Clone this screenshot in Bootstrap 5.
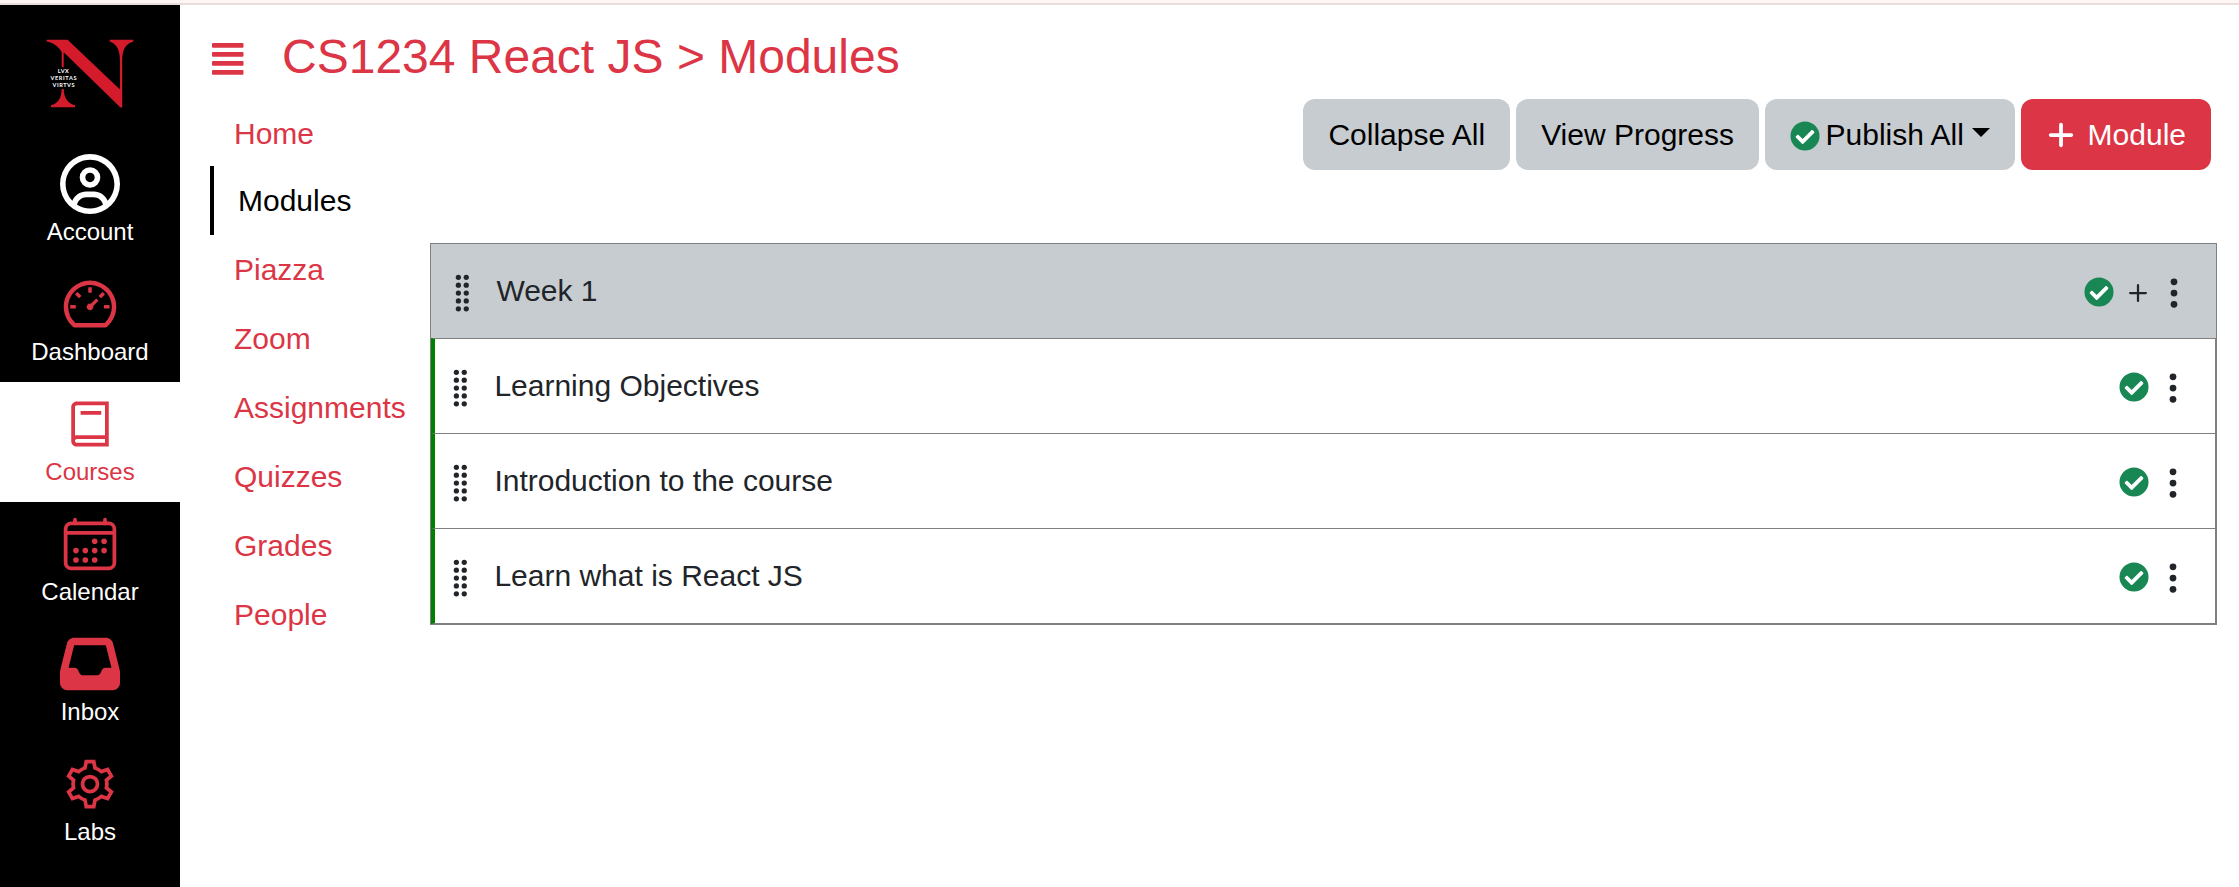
<!DOCTYPE html>
<html lang="en">
<head>
<meta charset="utf-8">
<meta name="viewport" content="width=device-width, initial-scale=1">
<title>CS1234 React JS - Modules</title>
<link href="https://cdn.jsdelivr.net/npm/bootstrap@5.3.0/dist/css/bootstrap.min.css" rel="stylesheet">
<style>
  body { font-family: "Liberation Sans", Arial, sans-serif; font-size: 30px; line-height: 45px; background: #fff; }
  svg { display: block; flex: none; fill: currentColor; }
  .top-strip { height: 5px; background: #fff5f3; border-bottom: 2px solid #e9dedc; }
  .app { height: calc(100vh - 5px); }
  .kanbas-nav { width: 180px; background: #000; font-size: 24px; line-height: 36px; }
  .kanbas-logo { height: 137px; }
  .kanbas-nav .list-group-item { height: 120px; padding: 12px 0; border: 0; background: #000; color: #fff; }
  .kanbas-nav .list-group-item.current { background: #fff; color: #dc3545; }
  .course-head { height: 94px; padding: 23px 0 0 32px; }
  .course-head h1 { font-size: 48px; line-height: 58px; font-weight: 400; margin: 0 0 0 38px; }
  .course-head svg { margin-top: 13px; }
  .course-nav { width: 220px; margin-left: 30px; }
  .course-nav a { padding: 12px 0 12px 24px; color: #dc3545; text-decoration: none; }
  .course-nav a:first-child { padding-bottom: 10px; }
  .course-nav a.current { border-left: 4px solid #000; color: #000; }
  .course-main { padding-right: 22px; }
  .toolbar { gap: 6px; padding-right: 6px; margin-bottom: 73px; }
  .toolbar .btn { font-size: 30px; line-height: 45px; padding: 12px 24px; border: 1px solid transparent; border-radius: 12px; }
  .toolbar .btn-gray { background: #c7ccd0; color: #000; }
  .toolbar .dropdown-toggle::after { margin-top: 16px; }
  .toolbar .publish-tick { margin: 9px 5.5px 0 0; }
  .toolbar .plus { margin: 8px 12px 0 0; }
  .module-box { border: 1px solid gray; color: #212529; }
  .module-box span { margin-top: -2px; }
  .module-title { height: 94px; padding: 0 24px 0 9px; background: #c7ccd0; }
  .lesson { height: 95px; padding: 0 24px 0 3px; border: 1px solid gray; border-left: 4px solid green; border-bottom: 0; }
  .lesson:last-child { height: 96px; border-bottom: 1px solid gray; }
  .grip { margin: 4px 14.4px 0 0; }
  .dots, .add { margin-top: 4px; }
  .tick { margin: 2px 6px 0 0; color: #198754; }
</style>
</head>
<body>
<svg width="0" height="0" class="position-absolute" aria-hidden="true">
  <symbol id="i-check" viewBox="0 0 512 512"><path d="M504 256c0 136.967-111.033 248-248 248S8 392.967 8 256 119.033 8 256 8s248 111.033 248 248z"/><path fill="#fff" d="M227.314 387.314l184-184c6.248-6.248 6.248-16.379 0-22.627l-22.627-22.627c-6.248-6.249-16.379-6.249-22.628 0L216 308.118l-70.059-70.059c-6.248-6.248-16.379-6.248-22.628 0l-22.627 22.627c-6.248 6.248-6.248 16.379 0 22.627l104 104c6.249 6.249 16.379 6.249 22.628.001z"/></symbol>
  <symbol id="i-dots" viewBox="0 0 512 512"><circle cx="256" cy="96" r="48"/><circle cx="256" cy="256" r="48"/><circle cx="256" cy="416" r="48"/></symbol>
  <symbol id="i-grip" viewBox="0 0 16 16"><circle cx="7" cy="2" r="1"/><circle cx="10" cy="2" r="1"/><circle cx="7" cy="5" r="1"/><circle cx="10" cy="5" r="1"/><circle cx="7" cy="8" r="1"/><circle cx="10" cy="8" r="1"/><circle cx="7" cy="11" r="1"/><circle cx="10" cy="11" r="1"/><circle cx="7" cy="14" r="1"/><circle cx="10" cy="14" r="1"/></symbol>
</svg>
<div class="top-strip"></div>
<div class="app d-flex">
  <nav class="kanbas-nav flex-shrink-0">
    <div class="kanbas-logo">
      <svg width="180" height="137" viewBox="0 5 180 137" role="img" aria-label="Northeastern University">
        <g fill="#d41b2c">
          <path d="M46.7 39.8H67.6L120 89.5V61C120 49 116 43.5 109.7 41.5V39.8H133.3V41.5C126 43.5 122.2 49 122.2 61V107.5H120.5L63.7 52.3V67.3H61.7V52C58 46 53 42.5 46.7 41.5Z"/>
          <path d="M61.7 89H63.7C64 98.5 68 103.5 75 105.3V107.2H51V105.3C58 103.5 61.5 98.5 61.7 89Z"/>
        </g>
        <g fill="#fff" font-family="Lato, sans-serif" font-weight="700" font-size="5.6" text-anchor="middle">
          <text x="63.3" y="73.3" textLength="11">LVX</text>
          <text x="63.5" y="80.3" textLength="26">VERITAS</text>
          <text x="63.5" y="86.8" textLength="22">VIRTVS</text>
        </g>
      </svg>
    </div>
    <div class="list-group list-group-flush rounded-0">
      <a href="#" class="list-group-item d-flex flex-column align-items-center">
        <svg width="60" height="60" viewBox="0 0 512 512"><path d="M406.5 399.6C387.4 352.9 341.5 320 288 320H224c-53.5 0-99.4 32.9-118.5 79.6C69.9 362.2 48 311.7 48 256C48 141.1 141.1 48 256 48s208 93.1 208 208c0 55.7-21.9 106.2-57.5 143.6zm-40.1 32.7C334.4 452.4 296.6 464 256 464s-78.4-11.6-110.5-31.7c7.3-36.7 39.7-64.3 78.5-64.3h64c38.8 0 71.2 27.6 78.5 64.3zM256 512A256 256 0 1 0 256 0a256 256 0 1 0 0 512zm0-272a40 40 0 1 1 0-80 40 40 0 1 1 0 80zm-88-40a88 88 0 1 0 176 0 88 88 0 1 0 -176 0z"/></svg>
        <span>Account</span>
      </a>
      <a href="#" class="list-group-item d-flex flex-column align-items-center">
        <svg class="text-danger" width="60" height="60" viewBox="0 0 1024 1024"><path d="M924.8 385.6a446.7 446.7 0 0 0-96-142.4 446.7 446.7 0 0 0-142.4-96C631.1 123.8 572.5 112 512 112s-119.1 11.8-174.4 35.2a446.7 446.7 0 0 0-142.4 96 446.7 446.7 0 0 0-96 142.4C75.8 440.9 64 499.5 64 560c0 132.7 58.3 257.7 159.9 343.1l1.7 1.4c5.8 4.8 13.1 7.5 20.6 7.5h531.7c7.5 0 14.8-2.7 20.6-7.5l1.7-1.4C901.7 817.7 960 692.7 960 560c0-60.5-11.9-119.1-35.2-174.4zM761.4 836H262.6A371.12 371.12 0 0 1 140 560c0-99.4 38.7-192.8 109-263 70.3-70.3 163.7-109 263-109 99.4 0 192.8 38.7 263 109 70.3 70.3 109 163.7 109 263 0 105.6-44.5 205.5-122.6 276zM623.5 421.5a8.03 8.03 0 0 0-11.3 0L527.7 506c-18.7-5-39.4-.2-54.1 14.5a55.95 55.95 0 0 0 0 79.2 55.95 55.95 0 0 0 79.2 0 55.87 55.87 0 0 0 14.5-54.1l84.5-84.5c3.1-3.1 3.1-8.2 0-11.3l-28.3-28.3zM490 320h44c4.4 0 8-3.6 8-8v-80c0-4.4-3.6-8-8-8h-44c-4.4 0-8 3.6-8 8v80c0 4.4 3.6 8 8 8zm260 218v44c0 4.4 3.6 8 8 8h80c4.4 0 8-3.6 8-8v-44c0-4.4-3.6-8-8-8h-80c-4.4 0-8 3.6-8 8zm12.7-197.2l-31.1-31.1a8.03 8.03 0 0 0-11.3 0l-56.6 56.6a8.03 8.03 0 0 0 0 11.3l31.1 31.1c3.1 3.1 8.2 3.1 11.3 0l56.6-56.6c3.1-3.1 3.1-8.2 0-11.3zm-458.6-31.1a8.03 8.03 0 0 0-11.3 0l-31.1 31.1a8.03 8.03 0 0 0 0 11.3l56.6 56.6c3.1 3.1 8.2 3.1 11.3 0l31.1-31.1c3.1-3.1 3.1-8.2 0-11.3l-56.6-56.6zM262 530h-80c-4.4 0-8 3.6-8 8v44c0 4.4 3.6 8 8 8h80c4.4 0 8-3.6 8-8v-44c0-4.4-3.6-8-8-8z"/></svg>
        <span>Dashboard</span>
      </a>
      <a href="#" class="list-group-item current d-flex flex-column align-items-center">
        <svg width="60" height="60" viewBox="0 0 32 32"><path fill-rule="evenodd" d="M9 4C7.355 4 6 5.355 6 7V25C6 26.645 7.355 28 9 28H26V4ZM9 6H24V22H9C8.648 22 8.316 22.074 8 22.188V7C8 6.434 8.434 6 9 6ZM11 9V11H22V9ZM9 24H24V26H9C8.434 26 8 25.566 8 25S8.434 24 9 24Z"/></svg>
        <span>Courses</span>
      </a>
      <a href="#" class="list-group-item d-flex flex-column align-items-center">
        <svg class="text-danger" width="60" height="60" viewBox="0 0 512 512"><g fill="none" stroke="currentColor" stroke-width="32" stroke-linecap="round" stroke-linejoin="round"><rect x="48" y="80" width="416" height="384" rx="48"/><path d="M128 48v32M384 48v32M464 160H48"/></g><circle cx="296" cy="232" r="24"/><circle cx="376" cy="232" r="24"/><circle cx="296" cy="312" r="24"/><circle cx="376" cy="312" r="24"/><circle cx="136" cy="312" r="24"/><circle cx="216" cy="312" r="24"/><circle cx="136" cy="392" r="24"/><circle cx="216" cy="392" r="24"/><circle cx="296" cy="392" r="24"/></svg>
        <span>Calendar</span>
      </a>
      <a href="#" class="list-group-item d-flex flex-column align-items-center">
        <svg class="text-danger" width="60" height="60" viewBox="0 0 512 512"><path d="M121 32C91.6 32 66 52 58.9 80.5L1.9 308.4C.6 313.5 0 318.7 0 323.9V416c0 35.3 28.7 64 64 64H448c35.3 0 64-28.7 64-64V323.9c0-5.2-.6-10.4-1.9-15.5l-57-227.9C446 52 420.4 32 391 32H121zm0 64H391l48 192H387.8c-12.1 0-23.2 6.8-28.6 17.7l-14.3 28.6c-5.4 10.8-16.5 17.7-28.6 17.7H195.8c-12.1 0-23.2-6.8-28.6-17.7l-14.3-28.6c-5.4-10.8-16.5-17.7-28.6-17.7H73L121 96z"/></svg>
        <span>Inbox</span>
      </a>
      <a href="#" class="list-group-item d-flex flex-column align-items-center">
        <svg class="text-danger" width="60" height="60" viewBox="0 0 32 32"><path fill-rule="evenodd" d="M13.188 3L12.438 6.781C11.484 7.156 10.625 7.684 9.844 8.313L6.156 7.063L3.344 11.938L6.188 14.438C6.105 14.949 6 15.461 6 16C6 16.539 6.105 17.051 6.188 17.563L3.344 20.063L6.156 24.938L9.844 23.688C10.625 24.316 11.484 24.844 12.438 25.219L13.188 29H18.813L19.563 25.219C20.516 24.844 21.375 24.316 22.156 23.688L25.844 24.938L28.656 20.063L25.813 17.563C25.895 17.051 26 16.539 26 16C26 15.461 25.895 14.949 25.813 14.438L28.656 11.938L25.844 7.063L22.156 8.313C21.375 7.684 20.516 7.156 19.563 6.781L18.813 3ZM14.813 5H17.188L17.813 8.188L18.375 8.375C19.512 8.73 20.543 9.332 21.406 10.125L21.844 10.531L24.938 9.469L26.125 11.5L23.656 13.656L23.813 14.25C23.941 14.82 24 15.402 24 16C24 16.598 23.941 17.18 23.813 17.75L23.656 18.344L26.125 20.5L24.938 22.531L21.844 21.469L21.406 21.875C20.543 22.668 19.512 23.27 18.375 23.625L17.813 23.813L17.188 27H14.813L14.188 23.813L13.625 23.625C12.488 23.27 11.457 22.668 10.594 21.875L10.156 21.469L7.063 22.531L5.875 20.5L8.344 18.344L8.188 17.75C8.059 17.18 8 16.598 8 16C8 15.402 8.059 14.82 8.188 14.25L8.344 13.656L5.875 11.5L7.063 9.469L10.156 10.531L10.594 10.125C11.457 9.332 12.488 8.73 13.625 8.375L14.188 8.188ZM16 11A5 5 0 1 0 16 21A5 5 0 1 0 16 11ZM16 13A3 3 0 1 1 16 19A3 3 0 1 1 16 13Z"/></svg>
        <span>Labs</span>
      </a>
    </div>
  </nav>

  <div class="flex-grow-1">
    <header class="course-head d-flex align-items-start text-danger">
      <svg width="32" height="36" viewBox="0 0 32 36"><rect y="2.1" width="31.5" height="4.7" rx="1"/><rect y="11.1" width="31.5" height="4.7" rx="1"/><rect y="20.1" width="31.5" height="4.7" rx="1"/><rect y="29.1" width="31.5" height="4.7" rx="1"/></svg>
      <h1>CS1234 React JS &gt; Modules</h1>
    </header>
    <div class="d-flex">
      <nav class="course-nav d-flex flex-column flex-shrink-0">
        <a href="#">Home</a>
        <a href="#" class="current">Modules</a>
        <a href="#">Piazza</a>
        <a href="#">Zoom</a>
        <a href="#">Assignments</a>
        <a href="#">Quizzes</a>
        <a href="#">Grades</a>
        <a href="#">People</a>
      </nav>
      <main class="course-main flex-grow-1">
        <div class="toolbar d-flex justify-content-end">
          <button class="btn btn-gray">Collapse All</button>
          <button class="btn btn-gray">View Progress</button>
          <button class="btn btn-gray dropdown-toggle d-flex" data-bs-toggle="dropdown">
            <svg class="publish-tick text-success" width="30" height="30"><use href="#i-check"/></svg>Publish All
          </button>
          <button class="btn btn-danger d-flex">
            <svg class="plus" width="30" height="30" viewBox="-32 0 512 512"><path d="M256 80c0-17.7-14.3-32-32-32s-32 14.3-32 32V224H48c-17.7 0-32 14.3-32 32s14.3 32 32 32H192V432c0 17.7 14.3 32 32 32s32-14.3 32-32V288H400c17.7 0 32-14.3 32-32s-14.3-32-32-32H256V80z"/></svg>Module
          </button>
        </div>
        <section class="module-box">
          <div class="module-title d-flex align-items-center">
            <svg class="grip" width="42" height="42"><use href="#i-grip"/></svg>
            <span class="me-auto">Week 1</span>
            <svg class="tick" width="30" height="30"><use href="#i-check"/></svg>
            <svg class="add" width="36" height="36" viewBox="0 0 16 16"><path d="M8 4a.5.5 0 0 1 .5.5v3h3a.5.5 0 0 1 0 1h-3v3a.5.5 0 0 1-1 0v-3h-3a.5.5 0 0 1 0-1h3v-3A.5.5 0 0 1 8 4"/></svg>
            <svg class="dots" width="36" height="36"><use href="#i-dots"/></svg>
          </div>
          <div class="lesson d-flex align-items-center">
            <svg class="grip" width="42" height="42"><use href="#i-grip"/></svg>
            <span class="me-auto">Learning Objectives</span>
            <svg class="tick" width="30" height="30"><use href="#i-check"/></svg>
            <svg class="dots" width="36" height="36"><use href="#i-dots"/></svg>
          </div>
          <div class="lesson d-flex align-items-center">
            <svg class="grip" width="42" height="42"><use href="#i-grip"/></svg>
            <span class="me-auto">Introduction to the course</span>
            <svg class="tick" width="30" height="30"><use href="#i-check"/></svg>
            <svg class="dots" width="36" height="36"><use href="#i-dots"/></svg>
          </div>
          <div class="lesson d-flex align-items-center">
            <svg class="grip" width="42" height="42"><use href="#i-grip"/></svg>
            <span class="me-auto">Learn what is React JS</span>
            <svg class="tick" width="30" height="30"><use href="#i-check"/></svg>
            <svg class="dots" width="36" height="36"><use href="#i-dots"/></svg>
          </div>
        </section>
      </main>
    </div>
  </div>
</div>
<script src="https://cdn.jsdelivr.net/npm/bootstrap@5.3.0/dist/js/bootstrap.bundle.min.js"></script>
</body>
</html>
